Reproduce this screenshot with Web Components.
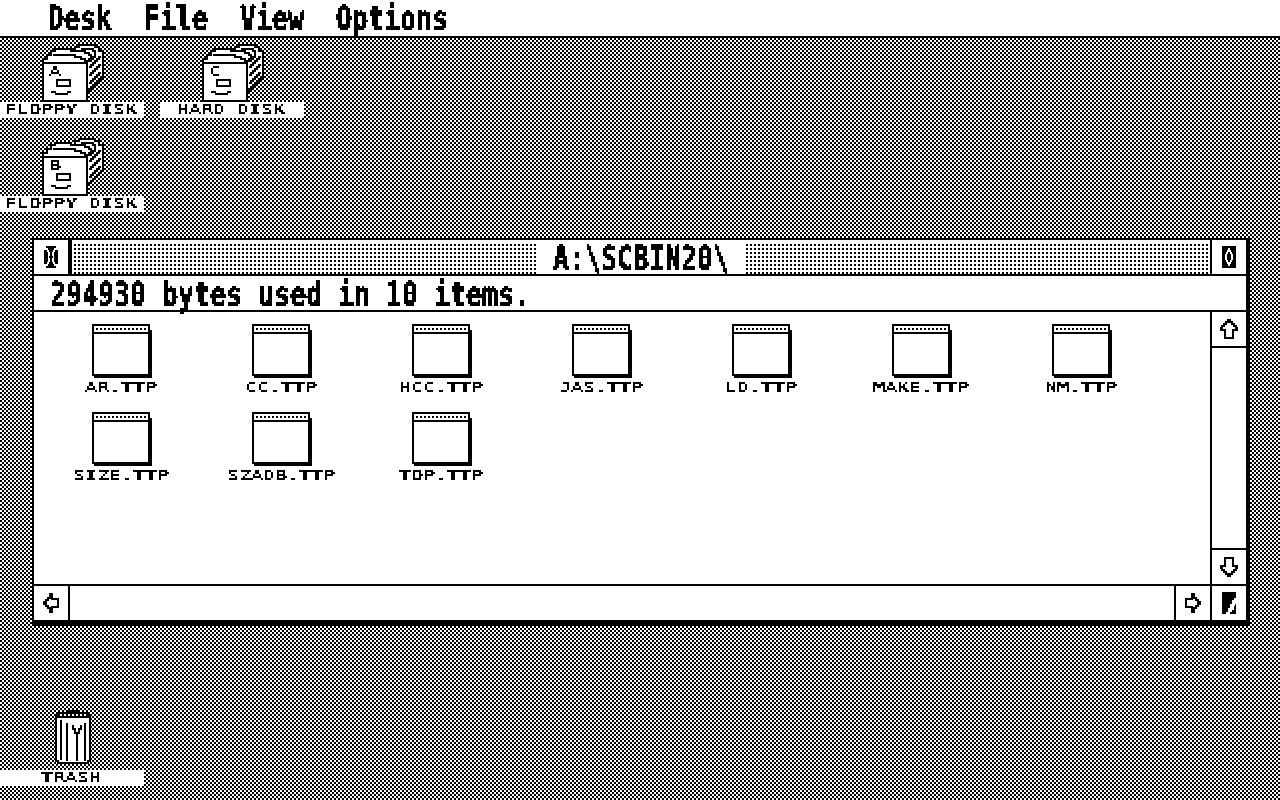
<!DOCTYPE html>
<html>
<head>
<meta charset="utf-8">
<title>GEM Desktop</title>
<style>
  html, body { margin: 0; height: 100%; overflow: hidden; background: #fff; }
</style>
</head>
<body>
<gem-desktop>
  <menu-bar slot="menu">
    <pixel-text>Desk</pixel-text>
    <pixel-text>File</pixel-text>
    <pixel-text>View</pixel-text>
    <pixel-text>Options</pixel-text>
  </menu-bar>

  <desk-icon style="left:0;top:42px" kind="disk" letter="A" label="FLOPPY DISK"></desk-icon>
  <desk-icon style="left:160px;top:42px" kind="disk" letter="C" label="HARD DISK"></desk-icon>
  <desk-icon style="left:0;top:136px" kind="disk" letter="B" label="FLOPPY DISK"></desk-icon>
  <desk-icon style="left:0;top:710px" kind="trash" label="TRASH"></desk-icon>

  <gem-window title-text="A:\SCBIN20\" info="294930 bytes used in 10 items.">
    <file-icon label="AR.TTP"></file-icon>
    <file-icon label="CC.TTP"></file-icon>
    <file-icon label="HCC.TTP"></file-icon>
    <file-icon label="JAS.TTP"></file-icon>
    <file-icon label="LD.TTP"></file-icon>
    <file-icon label="MAKE.TTP"></file-icon>
    <file-icon label="NM.TTP"></file-icon>
    <file-icon label="SIZE.TTP"></file-icon>
    <file-icon label="SZADB.TTP"></file-icon>
    <file-icon label="TOP.TTP"></file-icon>
  </gem-window>
</gem-desktop>

<script>
// bitmap look: threshold the glyphs, then sample every other pixel and double it
const pixelFilter = (id, table) => `
  <svg width="0" height="0" style="position:absolute">
    <filter id="${id}" x="0" y="0" width="100%" height="100%" color-interpolation-filters="sRGB">
      <feConvolveMatrix in="SourceAlpha" order="2" kernelMatrix="1 1 1 1" divisor="4" targetX="0" targetY="0" edgeMode="none" preserveAlpha="false" result="avg"/>
      <feComponentTransfer in="avg" result="hard">
        <feFuncA type="discrete" tableValues="${table}"/>
      </feComponentTransfer>
      <feFlood x="0" y="0" width="1" height="1" flood-color="#000"/>
      <feComposite width="2" height="2"/>
      <feTile result="grid"/>
      <feComposite in="hard" in2="grid" operator="in" result="dots"/>
      <feOffset in="dots" dx="1" dy="0" result="d1"/>
      <feOffset in="dots" dx="0" dy="1" result="d2"/>
      <feOffset in="dots" dx="1" dy="1" result="d3"/>
      <feMerge>
        <feMergeNode in="dots"/><feMergeNode in="d1"/><feMergeNode in="d2"/><feMergeNode in="d3"/>
      </feMerge>
    </filter>
  </svg>`;

class PixelText extends HTMLElement {
  connectedCallback() {
    if (this.shadowRoot) return;
    const small = this.hasAttribute('small');
    const adv = small ? 12 : 16;
    const w = this.textContent.trim().length * adv;
    this.attachShadow({ mode: 'open' }).innerHTML = `
      <style>
        :host {
          display: block; flex: none; width: ${w}px; height: ${small ? 14 : 38}px; color: #000;
          ${small ? 'margin-left: -1px; margin-right: 1px;' : ''}
        }
        .f { display: block; width: ${w}px; height: 100%; filter: url(#px); }
        .t {
          display: block; white-space: pre; transform-origin: 0 0;
          font-family: "DejaVu Sans Mono", "Liberation Mono", monospace;
          font-weight: ${small ? 400 : 700};
          font-size: ${small ? 20 : 26.5}px;
          line-height: ${small ? 15 : 30}px;
          letter-spacing: ${small ? -0.04 : 0.05}px;
          transform: scaleY(${small ? 0.686 : 1.24});
        }
      </style>
      ${pixelFilter('px', small ? '0 0 1 1 1' : '0 1 1')}
      <span class="f"><span class="t"><slot></slot></span></span>`;
  }
}

class MenuBar extends HTMLElement {
  constructor() {
    super();
    this.attachShadow({ mode: 'open' }).innerHTML = `
      <style>
        :host {
          display: flex; gap: 32px; box-sizing: border-box;
          height: 38px; padding-left: 48px;
          background: #fff; border-bottom: 2px solid #000;
        }
      </style>
      <slot></slot>`;
  }
}

class GemDesktop extends HTMLElement {
  constructor() {
    super();
    this.attachShadow({ mode: 'open' }).innerHTML = `
      <style>
        :host { display: block; position: relative; width: 1280px; height: 800px; overflow: hidden; }
        .top { position: relative; z-index: 1; }
        .pattern { position: absolute; inset: 0; display: block; }
      </style>
      <svg class="pattern" width="1280" height="800" shape-rendering="crispEdges">
        <defs>
          <pattern id="check" width="4" height="4" patternUnits="userSpaceOnUse">
            <rect width="4" height="4" fill="#fff"/>
            <rect x="0" y="0" width="2" height="2" fill="#000"/>
            <rect x="2" y="2" width="2" height="2" fill="#000"/>
          </pattern>
        </defs>
        <rect width="1280" height="800" fill="url(#check)"/>
      </svg>
      <div class="top"><slot name="menu"></slot></div>
      <slot></slot>`;
  }
}

const diskSvg = `
  <svg width="68" height="62" viewBox="0 0 68 62" shape-rendering="crispEdges" fill="none" stroke="#000" stroke-width="2">
    <path fill="#fff" d="M5 21V17H9V13H13V9H17V7H33V9H37V5H41V3H57V5H61V9H65V35H63V37H61V39H59V41H57V43H55V45H53V47H51V49H49V21Z"/>
    <path d="M15 13H37V15H43V17H47V19H49"/>
    <path d="M35 9H47V11H51V13H53V17H51V19H49"/>
    <path d="M43 7H55V9H57V15H55V17H53V19H51"/>
    <path d="M63 15H61V17H59V19H57V21H55V23H53V25H51"/>
    <path d="M63 23H61V25H59V27H57V29H55V31H53V33H51"/>
    <path d="M63 31H61V33H59V35H57V37H55V39H53V41H51"/>
    <rect x="5" y="21" width="44" height="38" fill="#fff"/>
    <rect x="19" y="38" width="13" height="6"/>
    <path d="M13 50H18M17 52H30M29 50H33"/>
  </svg>`;

const trashSvg = `
  <svg width="68" height="60" viewBox="0 0 68 60" shape-rendering="crispEdges" fill="none" stroke="#000" stroke-width="2">
    <path d="M29 1H41"/>
    <path d="M19 7V5H21V3H49V5H51V7"/>
    <path fill="#fff" d="M18 7H52V51H50V53H20V51H18Z"/>
    <path d="M23 10V50"/>
    <path d="M29 13V51"/>
    <path d="M39 23V51M35 15V19H37V23H41V19H43V15"/>
    <path d="M47 13V51"/>
  </svg>`;

class DeskIcon extends HTMLElement {
  connectedCallback() {
    if (this.shadowRoot) return;
    const kind = this.getAttribute('kind');
    const letter = this.getAttribute('letter');
    this.attachShadow({ mode: 'open' }).innerHTML = `
      <style>
        :host {
          position: absolute; display: flex; flex-direction: column; align-items: center;
          width: 144px; z-index: 1;
        }
        .pic { position: relative; width: 68px; height: 60px; }
        svg { display: block; }
        .pic pixel-text { position: absolute; left: 12px; top: 24px; }
        .label {
          box-sizing: border-box; width: 144px; height: 16px; padding-top: 2px;
          background: #fff; display: flex; justify-content: center;
        }
      </style>
      <div class="pic">
        ${kind === 'trash' ? trashSvg : diskSvg}
        ${letter ? `<pixel-text small>${letter}</pixel-text>` : ''}
      </div>
      <div class="label"><pixel-text small>${this.getAttribute('label')}</pixel-text></div>`;
  }
}

class FileIcon extends HTMLElement {
  connectedCallback() {
    if (this.shadowRoot) return;
    this.attachShadow({ mode: 'open' }).innerHTML = `
      <style>
        :host { display: flex; flex-direction: column; align-items: center; width: 160px; height: 88px; }
        svg { display: block; }
        pixel-text { margin-top: 4px; }
      </style>
      <svg width="60" height="54" viewBox="0 0 60 54" shape-rendering="crispEdges">
        <defs>
          <pattern id="dots" width="4" height="2" patternUnits="userSpaceOnUse">
            <rect width="2" height="2" fill="#000"/>
          </pattern>
        </defs>
        <rect x="2" y="6" width="58" height="48" fill="#000"/>
        <rect x="0" y="0" width="58" height="52" fill="#000"/>
        <rect x="2" y="2" width="54" height="48" fill="#fff"/>
        <rect x="0" y="8" width="58" height="2" fill="#000"/>
        <rect x="4" y="4" width="50" height="2" fill="url(#dots)"/>
      </svg>
      <pixel-text small>${this.getAttribute('label')}</pixel-text>`;
  }
}

// up-pointing by default; "side" draws the narrower left-pointing one
class GemArrow extends HTMLElement {
  connectedCallback() {
    if (this.shadowRoot) return;
    const turn = this.getAttribute('turn') || 0;
    const d = this.hasAttribute('side')
      ? 'M3 9V11H5V13H7V15H9V19H11V14H17V6H11V1H9V5H7V7H5V9Z'
      : 'M9 1H11V3H13V5H15V7H17V9H18V11H14V19H6V11H2V9H3V7H5V5H7V3H9Z';
    this.attachShadow({ mode: 'open' }).innerHTML = `
      <style>
        :host { display: flex; align-items: center; justify-content: center; width: 34px; height: 34px; flex: none; background: #fff; }
        svg { display: block; transform: rotate(${turn}deg); }
      </style>
      <svg width="20" height="20" viewBox="0 0 20 20" shape-rendering="crispEdges" fill="#fff" stroke="#000" stroke-width="2">
        <path d="${d}"/>
      </svg>`;
  }
}

class GemWindow extends HTMLElement {
  connectedCallback() {
    if (this.shadowRoot) return;
    this.attachShadow({ mode: 'open' }).innerHTML = `
      <style>
        :host {
          position: absolute; left: 32px; top: 238px; width: 1218px; height: 388px;
          box-sizing: border-box; display: flex; flex-direction: column; z-index: 1;
          background: #fff;
          border-style: solid; border-color: #000; border-width: 2px 4px 6px 2px;
        }
        .box { width: 34px; height: 34px; flex: none; display: flex; align-items: center; justify-content: center; background: #fff; }
        .title { display: flex; height: 34px; flex: none; border-bottom: 2px solid #000; }
        .closer { border-right: 4px solid #000; }
        .fuller { border-left: 2px solid #000; }
        .move { flex: 1; display: flex; justify-content: center; position: relative; }
        .dots { position: absolute; inset: 0; width: 100%; height: 100%; display: block; }
        .name { position: relative; background: #fff; padding: 0 16px; height: 34px; }
        .info { height: 34px; flex: none; padding-left: 16px; border-bottom: 2px solid #000; }
        .middle { flex: 1; display: flex; min-height: 0; border-bottom: 2px solid #000; }
        .files {
          flex: 1; display: grid; box-sizing: border-box;
          grid-template-columns: repeat(7, 160px); grid-auto-rows: 88px;
          padding: 12px 0 0 8px;
        }
        .vbar { width: 34px; flex: none; display: flex; flex-direction: column; justify-content: space-between; border-left: 2px solid #000; }
        .vbar gem-arrow:first-child { border-bottom: 2px solid #000; }
        .vbar gem-arrow:last-child { border-top: 2px solid #000; }
        .bottom { display: flex; height: 34px; flex: none; }
        .bottom .track { flex: 1; border-left: 2px solid #000; border-right: 2px solid #000; }
        .size { border-left: 2px solid #000; }
      </style>
      <div class="title">
        <div class="box closer">
          <svg width="14" height="22" viewBox="0 0 14 22" shape-rendering="crispEdges">
            <path d="M2 0H12V4H14V18H12V22H2V18H0V4H2Z"/>
            <path fill="#fff" d="M2 2H4V4H5V6H6V10H5V12H6V16H5V18H4V20H2V18H3V16H4V12H4V10H4V6H3V4H2Z"/>
            <path fill="#fff" d="M12 2H10V4H9V6H8V10H9V12H8V16H9V18H10V20H12V18H11V16H10V12H10V10H10V6H11V4H12Z"/>
          </svg>
        </div>
        <div class="move">
          <svg class="dots" shape-rendering="crispEdges">
            <defs>
              <pattern id="move" width="4" height="4" patternUnits="userSpaceOnUse">
                <rect x="2" y="0" width="2" height="2" fill="#000"/>
              </pattern>
            </defs>
            <rect y="4" width="100%" height="30" fill="url(#move)"/>
          </svg>
          <div class="name"><pixel-text>${this.getAttribute('title-text')}</pixel-text></div>
        </div>
        <div class="box fuller">
          <svg width="14" height="22" viewBox="0 0 14 22" shape-rendering="crispEdges">
            <path fill-rule="evenodd" d="M0 0H14V22H0ZM6 2H8V4H9V6H10V8H11V14H10V16H9V18H8V20H6V18H5V16H4V14H3V8H4V6H5V4H6Z"/>
            <path d="M6 6H8V8H9V14H8V16H6V14H5V8H6Z"/>
          </svg>
        </div>
      </div>
      <div class="info"><pixel-text>${this.getAttribute('info')}</pixel-text></div>
      <div class="middle">
        <div class="files"><slot></slot></div>
        <div class="vbar">
          <gem-arrow></gem-arrow>
          <gem-arrow turn="180"></gem-arrow>
        </div>
      </div>
      <div class="bottom">
        <gem-arrow side></gem-arrow>
        <div class="track"></div>
        <gem-arrow side turn="180"></gem-arrow>
        <div class="box size">
          <svg width="14" height="22" viewBox="0 0 14 22" shape-rendering="crispEdges">
            <path d="M0 0H14V6H12V8H10V12H8V16H6V20H4V22H0Z"/>
            <path d="M14 12V22H8V20H10V18H12V14H13V12Z"/>
          </svg>
        </div>
      </div>`;
  }
}

customElements.define('pixel-text', PixelText);
customElements.define('menu-bar', MenuBar);
customElements.define('gem-desktop', GemDesktop);
customElements.define('desk-icon', DeskIcon);
customElements.define('file-icon', FileIcon);
customElements.define('gem-arrow', GemArrow);
customElements.define('gem-window', GemWindow);
</script>
</body>
</html>
